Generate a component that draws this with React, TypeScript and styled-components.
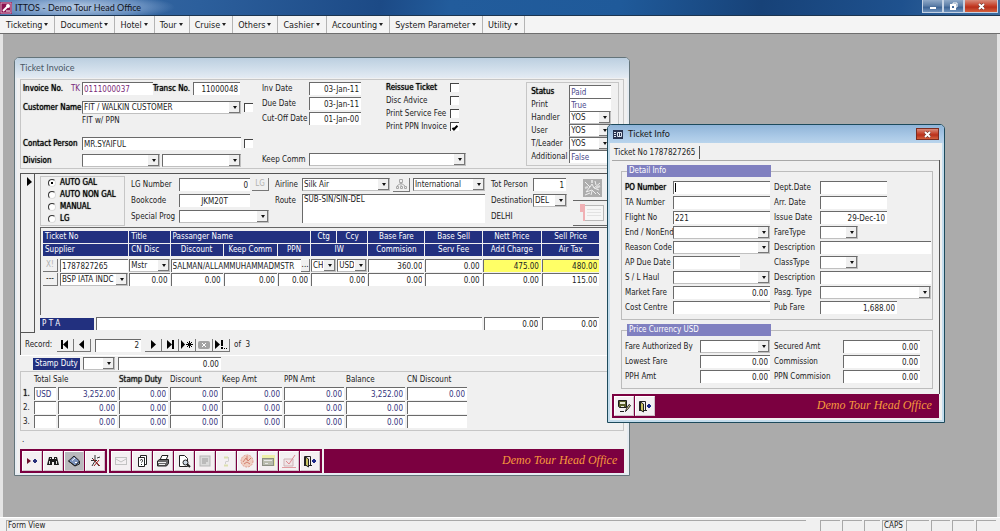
import React from "react";
import styled, { createGlobalStyle, css } from "styled-components";

const Global = createGlobalStyle`
  *, *::before, *::after { box-sizing: border-box; }
  html, body, #root { margin: 0; padding: 0; }
  body, button, input, select, textarea {
    font-family: "DejaVu Sans Condensed", "DejaVu Sans", sans-serif;
    font-size: 8px;
    line-height: 10px;
    color: #222;
  }
  button { cursor: pointer; }
`;

const face = "#f0f0f0";
const navy = "#22307f";
const maroon = "#7b0040";
const sunken = "#6a6a6a";

/* ---------- application frame ---------- */

const Frame = styled.div`
  display: flex;
  flex-direction: column;
  min-height: 100vh;
  background: ${face};
`;

const TitleBar = styled.header`
  display: flex;
  align-items: center;
  height: 16px;
  padding-right: 2px;
  border-bottom: 1px solid #1c3550;
  background:
    radial-gradient(ellipse 100px 14px at 75px 7px, rgba(205, 220, 240, 0.85), rgba(150, 180, 220, 0.5) 70%, transparent),
    linear-gradient(100deg, #3f6ea5 0, #2c5f9c 20%, #1c4a86 38%, #225c9c 45%, #1f5a9a 62%, #174278 76%, #1e518e 90%, #3c6ca0 100%);
`;

const AppTitle = styled.h1`
  flex: 1;
  margin: 0 0 0 3px;
  font: 400 9px/14px Lato, "Open Sans", sans-serif;
  color: #10131c;
`;

const Caption = styled.button<{ $close?: boolean }>`
  display: grid;
  place-items: center;
  align-self: flex-start;
  width: ${(p) => (p.$close ? 34 : 21)}px;
  height: 13px;
  padding: 0;
  border: 1px solid #c4d2e4;
  border-top: 0;
  background: ${(p) =>
    p.$close
      ? "linear-gradient(#d88c7c, #c43c24 50%, #b8301c 60%, #d4603c)"
      : "linear-gradient(#8fa9c8, #5a7ca6 50%, #3d6494 60%, #6f93bd)"};
`;

const MenuBar = styled.nav`
  display: flex;
  align-items: stretch;
  height: 18px;
  border-bottom: 1px solid #6e6e6e;
  background: #f4f4f4;
`;

const MenuItem = styled.button`
  display: flex;
  align-items: center;
  gap: 2px;
  padding: 0 6px 0 5px;
  border: 0;
  border-right: 1px solid #b4b4b4;
  background: none;
  font-size: 9px;
  white-space: nowrap;
  &:first-child { padding-left: 6px; }
  &::after {
    content: "";
    border: 2px solid transparent;
    border-top: 3px solid #222;
    border-bottom: 0;
  }
`;

const Desktop = styled.main`
  position: relative;
  flex: 1;
  min-height: 483px;
  overflow: hidden;
  border: solid #e4e4e4;
  border-width: 0 3px;
  background: #ababab;
`;

const StatusBar = styled.footer`
  display: flex;
  gap: 2px;
  height: 14px;
  padding: 2px 4px 0 6px;
  border-top: 1px solid #fff;
`;

const StatusCell = styled.span<{ $w?: number; $gap?: boolean }>`
  flex: ${(p) => (p.$w ? `0 0 ${p.$w}px` : "1")};
  margin-right: ${(p) => (p.$gap ? 12 : 0)}px;
  padding-left: 1px;
  border: solid #a8a8a8;
  border-width: 1px 0 0 1px;
`;

/* ---------- document windows ---------- */

const Win = styled.section<{ $active?: boolean }>`
  position: absolute;
  display: flex;
  flex-direction: column;
  border: 1px solid ${(p) => (p.$active ? "#1d4a5c" : "#64747a")};
  border-radius: 5px 5px 0 0;
  background: ${face};
  box-shadow: inset 0 0 0 2px ${(p) => (p.$active ? "#c3dcec" : "#e6ecf2")};
`;

const InvoiceWin = styled(Win)`
  top: 23px;
  left: 11px;
  width: 62%;
  min-width: 616px;
  padding: 0 5px 2px;
`;

const InfoWin = styled(Win)`
  top: 90px;
  left: 604px;
  width: 34%;
  min-width: 336px;
  padding: 0 4px 4px;
`;

const WinTitle = styled.header<{ $active?: boolean }>`
  display: flex;
  align-items: center;
  gap: 5px;
  height: ${(p) => (p.$active ? 18 : 20)}px;
  margin: 0 ${(p) => (p.$active ? -4 : -5)}px;
  padding: 0 5px;
  border-radius: 4px 4px 0 0;
  background: ${(p) =>
    p.$active ? "linear-gradient(#8fb4d8, #a9c8e6 60%, #b9d4ec)" : "linear-gradient(#bccfe0, #d3e0ec 60%, #e4ebf3)"};
  h2 {
    flex: 1;
    margin: 0;
    font: 400 9px/12px Lato, "Open Sans", sans-serif;
    color: ${(p) => (p.$active ? "#1b1b1b" : "#4a5866")};
  }
`;

const CloseButton = styled(Caption)`
  align-self: center;
  width: 23px;
  height: 12px;
  border: 1px solid #7c2c20;
`;

/* ---------- form controls ---------- */

const Label = styled.label<{ $bold?: boolean }>`
  white-space: nowrap;
  ${(p) => p.$bold && css`text-shadow: 0 0 1px #000; color: #000;`}
`;

const Note = styled.span`
  white-space: nowrap;
`;

const box = css`
  min-width: 0;
  height: 13px;
  margin: 0;
  padding: 0 2px 0 1px;
  border: solid ${sunken};
  border-width: 1px 0 0 1px;
  border-radius: 0;
  background: #fff;
  outline: none;
`;

const Text = styled.input<{ $w?: number; $align?: string; $color?: string; $fill?: string; $caret?: boolean }>`
  ${box}
  width: ${(p) => (p.$w ? `${p.$w}px` : "100%")};
  text-align: ${(p) => p.$align || "left"};
  ${(p) => p.$color && css`color: ${p.$color};`}
  ${(p) => p.$fill && css`background: ${p.$fill};`}
  ${(p) => p.$caret && css`background: linear-gradient(#000, #000) 1px 1px / 1px 9px no-repeat #fff;`}
`;

const Area = styled.textarea`
  ${box}
  width: 100%;
  height: 29px;
  resize: none;
  overflow: hidden;
`;

const SelectShell = styled.span<{ $w?: number }>`
  position: relative;
  display: block;
  width: ${(p) => (p.$w ? `${p.$w}px` : "100%")};
  height: 13px;
  select {
    ${box}
    display: block;
    width: 100%;
    padding-right: 12px;
    appearance: none;
    border-width: 1px;
    border-color: ${sunken} #c0c0c0 #c0c0c0 ${sunken};
  }
  &::before {
    content: "";
    position: absolute;
    top: 1px;
    right: 1px;
    width: 11px;
    height: 11px;
    border: solid #777;
    border-width: 0 1px 1px 0;
    background: ${face};
    pointer-events: none;
  }
  &::after {
    content: "";
    position: absolute;
    top: 5px;
    right: 4px;
    border: 2px solid transparent;
    border-top: 3px solid #111;
    border-bottom: 0;
    pointer-events: none;
  }
`;

type SelectProps = { id?: string; value?: string; w?: number; label?: string };
const Select = ({ id, value = "", w, label }: SelectProps) => (
  <SelectShell $w={w}>
    <select id={id} aria-label={label} defaultValue={value}>
      <option value={value}>{value}</option>
    </select>
  </SelectShell>
);

const Check = styled.input.attrs({ type: "checkbox" })`
  appearance: none;
  display: grid;
  place-items: center;
  width: 9px;
  height: 9px;
  margin: 0;
  border: solid #444;
  border-width: 1px 0 0 1px;
  background: #fff;
  &:checked::after {
    content: "";
    width: 6px;
    height: 3px;
    border: solid #000;
    border-width: 0 0 2px 2px;
    transform: rotate(-45deg);
  }
`;

const Radio = styled.input.attrs({ type: "radio" })`
  appearance: none;
  display: grid;
  place-items: center;
  width: 8px;
  height: 8px;
  margin: 0;
  border: 1px solid;
  border-color: #333 #ddd #ddd #333;
  border-radius: 50%;
  background: #fff;
  &:checked::after {
    content: "";
    width: 2px;
    height: 2px;
    background: #000;
  }
`;

const SmallButton = styled.button<{ $w: number; $h?: number; $dim?: boolean }>`
  display: grid;
  place-items: center;
  flex: none;
  width: ${(p) => p.$w}px;
  height: ${(p) => p.$h || 13}px;
  padding: 0;
  border: solid #777;
  border-width: 0 1px 1px 0;
  background: ${face};
  color: ${(p) => (p.$dim ? "#b0b0b0" : "#000")};
`;

const Line = styled.div<{ $gap?: number }>`
  display: flex;
  align-items: center;
  gap: ${(p) => p.$gap || 0}px;
`;

/* ---------- invoice header ---------- */

const HeaderPanel = styled.div`
  display: grid;
  grid-template-columns: 239px 1fr 93px;
  height: 90px;
  margin-top: 1px;
  padding: 2px 4px 0 2px;
  border: 1px solid #c6c6c6;
`;

const CustomerGrid = styled.div`
  display: grid;
  grid-template-columns: 59px 159px 9px;
  grid-template-rows: 19px 15px 21px 17px 13px;
  > * { align-self: start; }
  > label { padding-top: 2px; }
  > input[type="checkbox"] { margin: 2px 0 0 3px; }
`;

const InvoiceLabel = styled(Label)`
  display: flex;
  justify-content: space-between;
  padding-right: 2px;
`;

const Prefix = styled.span`
  color: #7a2a78;
  text-shadow: none;
`;

const NumberLine = styled(Line)`
  ${Text}:last-child { margin-left: 3px; }
`;

const Middle = styled.div`
  display: flex;
  flex-direction: column;
  justify-content: space-between;
  padding-bottom: 2px;
`;

const MiddleTop = styled.div`
  display: flex;
  gap: 25px;
`;

const DateGrid = styled.div`
  display: grid;
  grid-template-columns: 47px 52px;
  grid-auto-rows: 13px;
  row-gap: 2px;
  align-items: center;
`;

const CheckGrid = styled.div`
  display: grid;
  grid-template-columns: 64px 9px;
  grid-auto-rows: 11px;
  row-gap: 2px;
  align-items: center;
`;

const KeepLabel = styled(Label)`
  flex: 0 0 47px;
`;

const StatusGrid = styled.div`
  display: grid;
  grid-template-columns: 38px 42px;
  grid-auto-rows: 13px;
  align-content: start;
  align-items: center;
  height: 84px;
  padding: 2px 4px;
  border: 1px solid #c6c6c6;
`;

/* ---------- ticket record ---------- */

const Record = styled.div`
  display: grid;
  grid-template-columns: 15px 1fr;
  column-gap: 5px;
  margin-top: 4px;
  border-top: 1px solid #555;
`;

const Selector = styled.div`
  height: 159px;
  padding: 3px 0 0 6px;
  border: solid #555;
  border-width: 0 1px 1px 1px;
`;

const RecordTop = styled.div`
  display: grid;
  grid-template-columns: 85px 138px 210px 76px 1fr;
  column-gap: 6px;
  height: 53px;
  padding-top: 2px;
`;

const RadioGroup = styled.fieldset`
  display: grid;
  grid-template-columns: 8px 1fr;
  grid-auto-rows: 12px;
  column-gap: 4px;
  align-items: center;
  min-width: 0;
  margin: 0 0 2px;
  padding: 0 0 0 7px;
  border: 1px solid #c6c6c6;
`;

const TripGrid = styled.div<{ $label: number }>`
  display: grid;
  grid-template-columns: ${(p) => p.$label}px minmax(0, 1fr);
  grid-auto-rows: 13px;
  row-gap: 3px;
  align-items: center;
  padding-top: 2px;
  ${Area} { align-self: start; }
`;

const PictureColumn = styled.div`
  width: 38px;
  button {
    display: grid;
    place-items: center;
    width: 100%;
    height: 25px;
    padding: 0;
    border: 0;
    border-bottom: 1px solid #666;
    background: none;
  }
`;

const TicketBox = styled.div`
  height: 88px;
  padding: 2px 24px 0 1px;
  border: solid #666;
  border-width: 1px 0 0 1px;
`;

const TicketTable = styled.table`
  width: 100%;
  table-layout: fixed;
  border-collapse: separate;
  border-spacing: 1px 1px;
  th {
    height: 12px;
    padding: 0 2px;
    background: ${navy};
    color: #fff;
    font-weight: 400;
    line-height: 12px;
    white-space: nowrap;
    overflow: hidden;
  }
  td { padding: 0; }
  tbody tr:first-child td { padding-top: 2px; }
`;

const Th = styled.th<{ $left?: boolean }>`
  text-align: ${(p) => (p.$left ? "left" : "center")};
`;

const PtaRow = styled.div`
  display: grid;
  grid-template-columns: 54px 1fr 56px 57px;
  column-gap: 2px;
  margin-top: 2px;
  padding-right: 25px;
  align-items: center;
`;

const NavyTag = styled.label`
  height: 12px;
  padding: 1px 2px;
  background: ${navy};
  color: #fff;
  white-space: nowrap;
`;

const Navigator = styled(Line)`
  height: 22px;
  padding: 2px 4px 0;
  border-left: 1px solid #555;
`;

const RecordLabel = styled(Label)`
  flex: 0 0 32px;
`;

const RecordNo = styled(Text)`
  margin: 0 4px;
`;

const Count = styled.span`
  margin-left: 4px;
`;

const StampRow = styled(Line)`
  height: 16px;
  padding-left: 13px;
  border-top: 1px solid #fff;
`;

const TotalsBox = styled.div`
  height: 60px;
  border: 1px solid #c6c6c6;
`;

const TotalsTable = styled.table`
  width: 448px;
  table-layout: fixed;
  border-collapse: separate;
  border-spacing: 2px 1px;
  th { padding: 0; height: 13px; font-weight: 400; text-align: left; white-space: nowrap; }
  td { padding: 0; }
`;

const Strong = styled.span`
  text-shadow: 0 0 1px #000;
`;

const Remark = styled.p`
  height: 18px;
  margin: 0;
  padding: 4px 2px 0;
`;

/* ---------- toolbars ---------- */

const Toolbar = styled.div`
  display: flex;
  gap: 2px;
`;

const ToolGroup = styled.div`
  display: flex;
  gap: 1px;
  padding: 2px;
  background: ${maroon};
`;

const Tool = styled.button<{ $down?: boolean }>`
  display: grid;
  place-items: center;
  width: 20px;
  height: 20px;
  padding: 0;
  border: 1px solid #fff;
  border-color: #fff #cfc3ca #cfc3ca #fff;
  background: ${(p) => (p.$down ? "#b9b9bd" : "#f4f0f2")};
`;

const Banner = styled.div`
  flex: 1;
  padding-right: 7px;
  background: ${maroon};
  color: #f79a3c;
  font: italic 400 12px/23px "Liberation Serif", serif;
  text-align: right;
`;

const InfoTools = styled(Toolbar)`
  gap: 0;
  margin-right: 1px;
`;

/* ---------- ticket info ---------- */

const TabStrip = styled.div`
  display: flex;
  height: 17px;
`;

const Tab = styled.button`
  margin: 3px 0 1px;
  padding: 0 4px 0 2px;
  border: 0;
  border-right: 1px solid #555;
  background: none;
`;

const TabPage = styled.div`
  height: 234px;
  margin-right: 1px;
  padding: 4px 6px 0 9px;
  border: solid #a8a8a8;
  border-width: 1px 0 0;
  box-shadow: 1px 0 0 #555;
`;

const Group = styled.fieldset`
  min-width: 0;
  margin: 0 0 4px;
  padding: 4px 1px 5px 3px;
  border: 1px solid #bcbcbc;
  legend {
    width: 144px;
    height: 12px;
    margin-left: 2px;
    padding: 1px 2px;
    background: #8080c0;
    color: #fff;
  }
`;

const DetailGrid = styled.div<{ $a: number; $b: number; $c: number }>`
  display: grid;
  grid-template-columns: ${(p) => p.$a}px ${(p) => p.$b}px ${(p) => p.$c}px minmax(0, 1fr);
  grid-auto-rows: 13px;
  row-gap: 2px;
  align-items: center;
  > label:nth-of-type(even) { padding-left: 4px; }
`;

/* ---------- drawings ---------- */

const Svg = ({ w = 14, h = 14, children }: { w?: number; h?: number; children: React.ReactNode }) => (
  <svg width={w} height={h} viewBox={`0 0 ${w} ${h}`} fill="none" aria-hidden="true">
    {children}
  </svg>
);

const Cross = () => (
  <Svg w={7} h={7}>
    <path d="M1 1l5 5M6 1L1 6" stroke="#5a2a22" strokeWidth="3" />
    <path d="M1 1l5 5M6 1L1 6" stroke="#fff" strokeWidth="2" />
  </Svg>
);

const KeyIcon = () => (
  <Svg w={12} h={12}>
    <rect width="12" height="12" fill="#8a1150" />
    <rect x="1" y="1" width="10" height="10" stroke="#d9a8c0" />
    <path d="M3 9l4-4" stroke="#fff" strokeWidth="2" />
    <circle cx="8" cy="4" r="2" fill="#fff" />
    <path d="M6 9h4" stroke="#fff" />
  </Svg>
);

const FormIcon = () => (
  <Svg w={10} h={9}>
    <rect width="10" height="9" fill="#26324e" />
    <path d="M1 2.5h2M1 4.5h2M1 6.5h2" stroke="#dfe6f0" />
    <path d="M4.5 2.5h4v4h-4zM6.5 3v4" stroke="#dfe6f0" />
  </Svg>
);

const NewIcon = () => (
  <Svg>
    <path d="M2 4v6l4-3z" fill="#6b0f2c" />
    <path d="M10 5v4M8 7h4" stroke="#28307a" strokeWidth="2" />
  </Svg>
);

const FindIcon = () => (
  <Svg>
    <path d="M3 3h3v2h2V3h3l2 8H8V8H6v3H1z" fill="#1d1d1d" />
    <path d="M3.5 7v3M10.5 7v3M4 4.5h1M9 4.5h1" stroke="#ddd" />
  </Svg>
);

const SaveIcon = () => (
  <Svg>
    <path d="M1.5 7L7 2l5.5 5v3L8 12z" fill="#7d93bd" stroke="#222" />
    <path d="M1.5 7L8 12l4.5-5" stroke="#222" />
    <path d="M5 6.5L8 4M8 8.5h2" stroke="#fff" />
  </Svg>
);

const DeleteIcon = () => (
  <Svg>
    <path d="M4 4l4 4M7 1v5M3 6.5h6M4 12l3-5 4 5M9 4l3-1" stroke="#333" />
    <path d="M5 5l7 7M11 6l-5 6" stroke="#a02020" />
  </Svg>
);

const MailIcon = () => (
  <Svg>
    <rect x="1.5" y="3.5" width="11" height="7" stroke="#c2c2c2" />
    <path d="M2 5l5 3 5-3" stroke="#c2c2c2" />
  </Svg>
);

const HelpDocIcon = () => (
  <Svg>
    <path d="M5.5 1.5h6v9h-6z" fill="#fff" stroke="#222" />
    <path d="M3.5 3.5h6v9h-6z" fill="#fff" stroke="#222" />
    <path d="M5.5 6.5q0-1 1-1t1 1-1 2M6.5 10v1" stroke="#222" />
  </Svg>
);

const PrintIcon = () => (
  <Svg>
    <path d="M4 6l2-4.5h6L10 6" fill="#fff" stroke="#222" />
    <path d="M1.5 7l2-1.5h9v4l-2 2.5h-9z" fill="#666" stroke="#222" />
    <path d="M2 8.5h8M3 10.5h6" stroke="#eee" />
  </Svg>
);

const PreviewIcon = () => (
  <Svg>
    <path d="M2.5 1.5h5l3 3v8h-8z" fill="#fff" stroke="#222" />
    <circle cx="8.5" cy="8.5" r="2.5" fill="#cdd8e4" stroke="#222" />
    <path d="M10 10l3 3" stroke="#222" strokeWidth="2" />
  </Svg>
);

const SheetIcon = () => (
  <Svg>
    <rect x="2" y="2" width="10" height="10" fill="#dadada" stroke="#b5b5b5" />
    <path d="M4 5h6M4 7h6M4 9h4" stroke="#9a9a9a" />
  </Svg>
);

const PaleIcon = () => (
  <Svg>
    <path d="M5 3.5h4M5 11.5h4" stroke="#dcdfb0" strokeWidth="2" />
    <path d="M9.5 3v4M6.5 7.5h3M6.5 8v2" stroke="#cfcfcf" />
  </Svg>
);

const SealIcon = () => (
  <Svg>
    <circle cx="7" cy="7" r="6" fill="#f0cfc2" stroke="#e09a8a" strokeDasharray="2 1" />
    <path d="M3 8l3-4 2 3 3-3M4 10l3-2 3 2M7 2v4" stroke="#d4806f" />
  </Svg>
);

const CardIcon = () => (
  <Svg>
    <rect x="1" y="1" width="13" height="11" fill="#eef0a8" />
    <rect x="1.5" y="4.5" width="11" height="7" fill="#b9bcae" stroke="#8c8f84" />
    <path d="M3 6.5h8M4 9.5h3" stroke="#e8e8e8" />
  </Svg>
);

const StampIcon = () => (
  <Svg>
    <path d="M2 5h9v7H2z" fill="#f0e4e6" stroke="#cfb4b8" />
    <path d="M4 7l3 3 6-9" stroke="#dc8a90" />
    <path d="M0 13.5h14" stroke="#e29aa0" />
  </Svg>
);

const ExitIcon = () => (
  <Svg>
    <path d="M1.5 12V2.5h6V11M1 11.5h8" stroke="#222" />
    <path d="M2.5 3l3 2v8l-3-2z" fill="#c9c463" stroke="#222" />
    <path d="M9 7h4M11 5v4" stroke="#1d2a8a" strokeWidth="2" />
  </Svg>
);

const SaveEditIcon = () => (
  <Svg>
    <path d="M1.5 1.5h8v7h-7l-1-1z" fill="#5b5f2a" stroke="#1a1a1a" />
    <path d="M3 3h5v2H3zM4 7h3v1H4z" fill="#e8e8d8" />
    <path d="M3 12.5h4" stroke="#1a1a1a" />
    <path d="M8.5 12.5l1-3 2.5-4 1.5 1-3 4z" fill="#efe9a8" stroke="#1a1a1a" />
  </Svg>
);

const TreeIcon = () => (
  <Svg w={12} h={12}>
    <path d="M4.5 1.5h3v3h-3zM1.5 8.5h2v2h-2zM5.5 8.5h2v2h-2zM9.5 8.5h2v2h-2zM6 4v4M2 8l4-3 4 3" stroke="#a8a8a8" />
  </Svg>
);

const PictureIcon = () => (
  <Svg w={19} h={18}>
    <rect width="19" height="18" fill="#adadad" />
    <path d="M2 3l5 5 2-3 2 4 6-5M7 8l-4 5 6-2 4 4M11 9l5 2M12 2l1 4M2 16l5-2M9 12l-1 4M14 13l3 3" stroke="#efefef" />
    <path d="M2 9l3-1M13 9l4-2M9 1v3" stroke="#dcdcdc" strokeWidth="2" />
  </Svg>
);

const FormCardIcon = () => (
  <Svg w={24} h={18}>
    <rect x="3.5" y="1.5" width="20" height="15" fill="#f6f6f6" stroke="#b8b8b8" />
    <path d="M7 5.5h14M7 8.5h14M7 11.5h14" stroke="#e2e2e2" />
    <path d="M0 0h5v17H3V8H0z" fill="#f0b0b4" />
  </Svg>
);

const navShapes: Record<string, React.ReactNode> = {
  first: <><path d="M9 0v9L4 4.5z" fill="#000" /><path d="M3 0v9" stroke="#000" strokeWidth="2" /></>,
  prev: <path d="M8 0v9L3 4.5z" fill="#000" />,
  next: <path d="M4 0v9l5-4.5z" fill="#000" />,
  last: <><path d="M3 0v9l5-4.5z" fill="#000" /><path d="M9 0v9" stroke="#000" strokeWidth="2" /></>,
  new: <><path d="M0 0v9l4-4.5z" fill="#000" /><path d="M8.5 1v7M5 4.5h7M6 2l5 5M11 2L6 7" stroke="#000" /></>,
  cancel: <><rect x="0" y="1" width="12" height="8" rx="2" fill="#a2a2a2" /><path d="M4 3l4 4M8 3L4 7" stroke="#fff" /></>,
  go: <><path d="M0 0v9l5-4.5z" fill="#000" /><path d="M7 0v6M7 7v2" stroke="#000" strokeWidth="2" /><path d="M9 8.5h1M11 8.5h1" stroke="#000" /></>,
};

const NavButton = ({ kind, label }: { kind: string; label: string }) => (
  <SmallButton $w={17} type="button" aria-label={label}>
    <Svg w={12} h={9}>{navShapes[kind]}</Svg>
  </SmallButton>
);

/* ---------- data ---------- */

const menus = ["Ticketing", "Document", "Hotel", "Tour", "Cruise", "Others", "Cashier", "Accounting", "System Parameter", "Utility"];

const statusRows = [
  { label: "Status", value: "Paid", bold: true },
  { label: "Print", value: "True" },
  { label: "Handler", value: "YOS", select: true },
  { label: "User", value: "YOS", select: true },
  { label: "T/Leader", value: "YOS", select: true },
  { label: "Additional", value: "False" },
];

const dates = [["Inv Date", "03-Jan-11"], ["Due Date", "03-Jan-11"], ["Cut-Off Date", "01-Jan-00"]];
const flags = [["Reissue Ticket", false, true], ["Disc Advice", false], ["Print Service Fee", false], ["Print PPN Invoice", true]] as [string, boolean, boolean?][];

const columns = [16, 68, 40, 52, 53, 32, 25, 30, 56, 56, 58, 57];

const totalsHead = ["Total Sale", "Stamp Duty", "Discount", "Keep Amt", "PPN Amt", "Balance", "CN Discount"];
const totalsRows = [
  ["USD", "3,252.00", "0.00", "0.00", "0.00", "0.00", "3,252.00", "0.00"],
  ["", "0.00", "0.00", "0.00", "0.00", "0.00", "0.00", ""],
  ["", "0.00", "0.00", "0.00", "0.00", "0.00", "0.00", ""],
];
const totalsColumns = [9, 22, 59, 49, 50, 60, 60, 59, 60];

type Entry = { label: string; value?: string; kind?: "select"; w?: number; align?: string; caret?: boolean };
const detail: Entry[] = [
  { label: "PO Number", caret: true }, { label: "Dept.Date", w: 67 },
  { label: "TA Number" }, { label: "Arr. Date", w: 67 },
  { label: "Flight No", value: "221" }, { label: "Issue Date", value: "29-Dec-10", w: 67, align: "right" },
  { label: "End / NonEnd", kind: "select" }, { label: "FareType", kind: "select", w: 38 },
  { label: "Reason Code", kind: "select" }, { label: "Description" },
  { label: "AP Due Date", w: 67 }, { label: "ClassType", kind: "select", w: 38 },
  { label: "S / L Haul", kind: "select" }, { label: "Description" },
  { label: "Market Fare", value: "0.00", align: "right" }, { label: "Pasg. Type", kind: "select" },
  { label: "Cost Centre" }, { label: "Pub Fare", value: "1,688.00", w: 77, align: "right" },
];
const price: Entry[] = [
  { label: "Fare Authorized By", kind: "select" }, { label: "Secured Amt", value: "0.00", w: 77, align: "right" },
  { label: "Lowest Fare", value: "0.00", align: "right" }, { label: "Commission", value: "0.00", w: 77, align: "right" },
  { label: "PPH Amt", value: "0.00", align: "right" }, { label: "PPN Commision", value: "0.00", w: 77, align: "right" },
];

const Entries = ({ items, prefix }: { items: Entry[]; prefix: string }) => (
  <>
    {items.map((e, i) => {
      const id = `${prefix}-${i}`;
      return (
        <React.Fragment key={id}>
          <Label htmlFor={id} $bold={e.caret}>{e.label}</Label>
          {e.kind ? (
            <Select id={id} w={e.w} />
          ) : (
            <Text id={id} $w={e.w} $align={e.align} $caret={e.caret} defaultValue={e.value} />
          )}
        </React.Fragment>
      );
    })}
  </>
);

const Amount = ({ name, value = "0.00", fill }: { name: string; value?: string; fill?: string }) => (
  <Text aria-label={name} defaultValue={value} $align="right" $fill={fill} />
);

/* ---------- windows ---------- */

const InvoiceHeader = () => (
  <HeaderPanel>
    <CustomerGrid>
      <InvoiceLabel $bold htmlFor="invoice">Invoice No. <Prefix>TK</Prefix></InvoiceLabel>
      <NumberLine>
        <Text id="invoice" $w={71} $color="#7a2a78" defaultValue="0111000037" />
        <Label $bold htmlFor="transc">Transc No.</Label>
        <Text id="transc" $w={47} $align="right" defaultValue="11000048" />
      </NumberLine>
      <span />
      <Label $bold htmlFor="customer">Customer Name</Label>
      <Select id="customer" value="FIT / WALKIN CUSTOMER" />
      <Check aria-label="Customer flag" />
      <span />
      <Note>FIT w/ PPN</Note>
      <span />
      <Label $bold htmlFor="contact">Contact Person</Label>
      <Text id="contact" defaultValue="MR.SYAIFUL" />
      <Check aria-label="Contact flag" />
      <Label $bold htmlFor="division">Division</Label>
      <Line $gap={2}>
        <Select id="division" w={78} />
        <Select label="Sub division" w={79} />
      </Line>
    </CustomerGrid>
    <Middle>
      <MiddleTop>
        <DateGrid>
          {dates.map(([label, value], i) => (
            <React.Fragment key={label}>
              <Label htmlFor={`date-${i}`}>{label}</Label>
              <Text id={`date-${i}`} $align="right" defaultValue={value} />
            </React.Fragment>
          ))}
        </DateGrid>
        <CheckGrid>
          {flags.map(([label, on, bold], i) => (
            <React.Fragment key={label}>
              <Label $bold={bold} htmlFor={`flag-${i}`}>{label}</Label>
              <Check id={`flag-${i}`} defaultChecked={on} />
            </React.Fragment>
          ))}
        </CheckGrid>
      </MiddleTop>
      <Line>
        <KeepLabel htmlFor="keep">Keep Comm</KeepLabel>
        <Select id="keep" w={157} />
      </Line>
    </Middle>
    <StatusGrid>
      {statusRows.map((r, i) => (
        <React.Fragment key={r.label}>
          <Label $bold={r.bold} htmlFor={`status-${i}`}>{r.label}</Label>
          {r.select ? (
            <Select id={`status-${i}`} value={r.value} />
          ) : (
            <Text id={`status-${i}`} $color="#4a4a8c" defaultValue={r.value} />
          )}
        </React.Fragment>
      ))}
    </StatusGrid>
  </HeaderPanel>
);

const TripDetails = () => (
  <RecordTop>
    <RadioGroup>
      {["AUTO GAL", "AUTO NON GAL", "MANUAL", "LG"].map((name, i) => (
        <React.Fragment key={name}>
          <Radio id={`mode-${i}`} name="mode" defaultChecked={i === 0} />
          <Label $bold htmlFor={`mode-${i}`}>{name}</Label>
        </React.Fragment>
      ))}
    </RadioGroup>
    <TripGrid $label={48}>
      <Label htmlFor="lg">LG Number</Label>
      <Line $gap={2}>
        <Text id="lg" $w={71} $align="right" defaultValue="0" />
        <SmallButton type="button" $w={17} $dim>LG</SmallButton>
      </Line>
      <Label htmlFor="book">Bookcode</Label>
      <Text id="book" $w={71} $align="center" defaultValue="JKM20T" />
      <Label htmlFor="prog">Special Prog</Label>
      <Select id="prog" />
    </TripGrid>
    <TripGrid $label={27}>
      <Label htmlFor="airline">Airline</Label>
      <Line $gap={3}>
        <Select id="airline" w={88} value="Silk Air" />
        <SmallButton type="button" $w={17} $h={14} aria-label="Airline tree"><TreeIcon /></SmallButton>
        <Select label="Flight scope" w={72} value="International" />
      </Line>
      <Label htmlFor="route">Route</Label>
      <Area id="route" defaultValue="SUB-SIN/SIN-DEL" />
    </TripGrid>
    <TripGrid $label={42}>
      <Label htmlFor="persons">Tot Person</Label>
      <Text id="persons" $align="right" $w={33} defaultValue="1" />
      <Label htmlFor="dest">Destination</Label>
      <Select id="dest" value="DEL" />
      <Note>DELHI</Note>
    </TripGrid>
    <PictureColumn>
      <button type="button" aria-label="Picture"><PictureIcon /></button>
      <button type="button" aria-label="Card"><FormCardIcon /></button>
    </PictureColumn>
  </RecordTop>
);

const Tickets = () => (
  <TicketBox>
    <TicketTable>
      <colgroup>
        {columns.map((w, i) => <col key={i} style={{ width: w }} />)}
      </colgroup>
      <thead>
        <tr>
          <Th $left colSpan={2}>Ticket No</Th>
          <Th $left>Title</Th>
          <Th $left colSpan={3}>Passanger Name</Th>
          <Th>Ctg</Th>
          <Th>Ccy</Th>
          <Th>Base Fare</Th>
          <Th>Base Sell</Th>
          <Th>Nett Price</Th>
          <Th>Sell Price</Th>
        </tr>
        <tr>
          <Th $left colSpan={2}>Supplier</Th>
          <Th $left>CN Disc</Th>
          <Th>Discount</Th>
          <Th>Keep Comm</Th>
          <Th>PPN</Th>
          <Th colSpan={2}>IW</Th>
          <Th>Commision</Th>
          <Th>Serv Fee</Th>
          <Th>Add Charge</Th>
          <Th>Air Tax</Th>
        </tr>
      </thead>
      <tbody>
        <tr>
          <td><SmallButton type="button" $w={15} $dim>X!</SmallButton></td>
          <td><Text aria-label="Ticket No" defaultValue="1787827265" /></td>
          <td><Select label="Title" value="Mstr" /></td>
          <td colSpan={3}>
            <Line>
              <Text aria-label="Passanger Name" defaultValue="SALMAN/ALLAMMUHAMMADMSTR" />
              <SmallButton type="button" $w={9}>...</SmallButton>
            </Line>
          </td>
          <td><Select label="Ctg" value="CH" /></td>
          <td><Select label="Ccy" value="USD" /></td>
          <td><Amount name="Base Fare" value="360.00" /></td>
          <td><Amount name="Base Sell" /></td>
          <td><Amount name="Nett Price" value="475.00" fill="#ffff66" /></td>
          <td><Amount name="Sell Price" value="480.00" fill="#ffff66" /></td>
        </tr>
        <tr>
          <td><SmallButton type="button" $w={15}>---</SmallButton></td>
          <td><Select label="Supplier" value="BSP IATA INDC" /></td>
          <td><Amount name="CN Disc" /></td>
          <td><Amount name="Discount" /></td>
          <td><Amount name="Keep Comm" /></td>
          <td><Amount name="PPN" /></td>
          <td colSpan={2}><Amount name="IW" /></td>
          <td><Amount name="Commision" /></td>
          <td><Amount name="Serv Fee" /></td>
          <td><Amount name="Add Charge" /></td>
          <td><Amount name="Air Tax" value="115.00" /></td>
        </tr>
      </tbody>
    </TicketTable>
  </TicketBox>
);

const Totals = () => (
  <TotalsBox>
    <TotalsTable>
      <colgroup>
        {totalsColumns.map((w, i) => <col key={i} style={{ width: w }} />)}
      </colgroup>
      <thead>
        <tr>
          <td />
          {totalsHead.map((h, i) => (
            <th key={h} colSpan={i === 0 ? 2 : 1}>{i === 1 ? <Strong>{h}</Strong> : h}</th>
          ))}
        </tr>
      </thead>
      <tbody>
        {totalsRows.map((row, r) => (
          <tr key={r}>
            <td>{r === 0 ? <Strong>1.</Strong> : `${r + 1}.`}</td>
            {row.map((v, c) => (
              <td key={c}>
                <Text
                  aria-label={`${c === 0 ? "Currency" : totalsHead[c - 1]} ${r + 1}`}
                  defaultValue={v}
                  $align={c === 0 ? "left" : "right"}
                  $color="#33337c"
                />
              </td>
            ))}
          </tr>
        ))}
      </tbody>
    </TotalsTable>
  </TotalsBox>
);

const groupOne = [["New", NewIcon], ["Find", FindIcon], ["Save", SaveIcon], ["Delete", DeleteIcon]] as [string, React.FC][];
const groupTwo = [
  ["Mail", MailIcon], ["Help", HelpDocIcon], ["Print", PrintIcon], ["Preview", PreviewIcon], ["Sheet", SheetIcon],
  ["Query", PaleIcon], ["Seal", SealIcon], ["Card", CardIcon], ["Approve", StampIcon], ["Exit", ExitIcon],
] as [string, React.FC][];

const TicketInvoice = () => (
  <InvoiceWin>
    <WinTitle><h2>Ticket Invoice</h2></WinTitle>
    <InvoiceHeader />
    <Record>
      <Selector>
        <Svg w={6} h={9}><path d="M0 0v9l5-4z" fill="#000" /></Svg>
      </Selector>
      <div>
        <TripDetails />
        <Tickets />
        <PtaRow>
          <NavyTag htmlFor="pta">P T A</NavyTag>
          <Text id="pta" />
          <Amount name="PTA charge" />
          <Amount name="PTA tax" />
        </PtaRow>
      </div>
    </Record>
    <Navigator>
      <RecordLabel htmlFor="record">Record:</RecordLabel>
      <NavButton kind="first" label="First record" />
      <NavButton kind="prev" label="Previous record" />
      <RecordNo id="record" $w={46} $align="right" defaultValue="2" />
      <NavButton kind="next" label="Next record" />
      <NavButton kind="last" label="Last record" />
      <NavButton kind="new" label="New record" />
      <NavButton kind="cancel" label="Cancel" />
      <NavButton kind="go" label="Go to" />
      <Count>of&nbsp; 3</Count>
    </Navigator>
    <StampRow $gap={3}>
      <NavyTag htmlFor="stamp">Stamp Duty</NavyTag>
      <Select id="stamp" w={32} />
      <Text aria-label="Stamp duty amount" $w={103} $align="right" defaultValue="0.00" />
    </StampRow>
    <Totals />
    <Remark>.</Remark>
    <Toolbar>
      <ToolGroup>
        {groupOne.map(([name, Icon]) => (
          <Tool key={name} type="button" aria-label={name} $down={name === "Save"}><Icon /></Tool>
        ))}
      </ToolGroup>
      <ToolGroup>
        {groupTwo.map(([name, Icon]) => (
          <Tool key={name} type="button" aria-label={name}><Icon /></Tool>
        ))}
      </ToolGroup>
      <Banner>Demo Tour Head Office</Banner>
    </Toolbar>
  </InvoiceWin>
);

const TicketInfo = () => (
  <InfoWin $active>
    <WinTitle $active>
      <FormIcon />
      <h2>Ticket Info</h2>
      <CloseButton type="button" $close aria-label="Close Ticket Info"><Cross /></CloseButton>
    </WinTitle>
    <TabStrip><Tab type="button">Ticket No 1787827265</Tab></TabStrip>
    <TabPage>
      <Group>
        <legend>Detail Info</legend>
        <DetailGrid $a={48} $b={97} $c={50}><Entries items={detail} prefix="detail" /></DetailGrid>
      </Group>
      <Group>
        <legend>Price Currency USD</legend>
        <DetailGrid $a={75} $b={70} $c={73}><Entries items={price} prefix="price" /></DetailGrid>
      </Group>
    </TabPage>
    <InfoTools>
      <ToolGroup>
        <Tool type="button" aria-label="Save changes"><SaveEditIcon /></Tool>
        <Tool type="button" aria-label="Close form"><ExitIcon /></Tool>
      </ToolGroup>
      <Banner>Demo Tour Head Office</Banner>
    </InfoTools>
  </InfoWin>
);

export default function App() {
  return (
    <Frame>
      <Global />
      <TitleBar>
        <KeyIcon />
        <AppTitle>ITTOS - Demo Tour Head Office</AppTitle>
        <Caption type="button" aria-label="Minimize">
          <Svg w={8} h={7}><path d="M1 5h6" stroke="#fff" strokeWidth="2" /></Svg>
        </Caption>
        <Caption type="button" aria-label="Restore">
          <Svg w={8} h={8}><path d="M3 2V1h4v4H6" stroke="#fff" /><rect x="1" y="3" width="4" height="4" stroke="#fff" strokeWidth="2" /></Svg>
        </Caption>
        <Caption type="button" $close aria-label="Close"><Cross /></Caption>
      </TitleBar>
      <MenuBar>
        {menus.map((m) => <MenuItem key={m} type="button">{m}</MenuItem>)}
      </MenuBar>
      <Desktop>
        <TicketInvoice />
        <TicketInfo />
      </Desktop>
      <StatusBar>
        <StatusCell $gap>Form View</StatusCell>
        <StatusCell $w={20} />
        <StatusCell $w={20} />
        <StatusCell $w={16} />
        <StatusCell $w={22}>CAPS</StatusCell>
        <StatusCell $w={23} />
        <StatusCell $w={19} />
        <StatusCell $w={22} />
        <StatusCell $w={20} />
      </StatusBar>
    </Frame>
  );
}
